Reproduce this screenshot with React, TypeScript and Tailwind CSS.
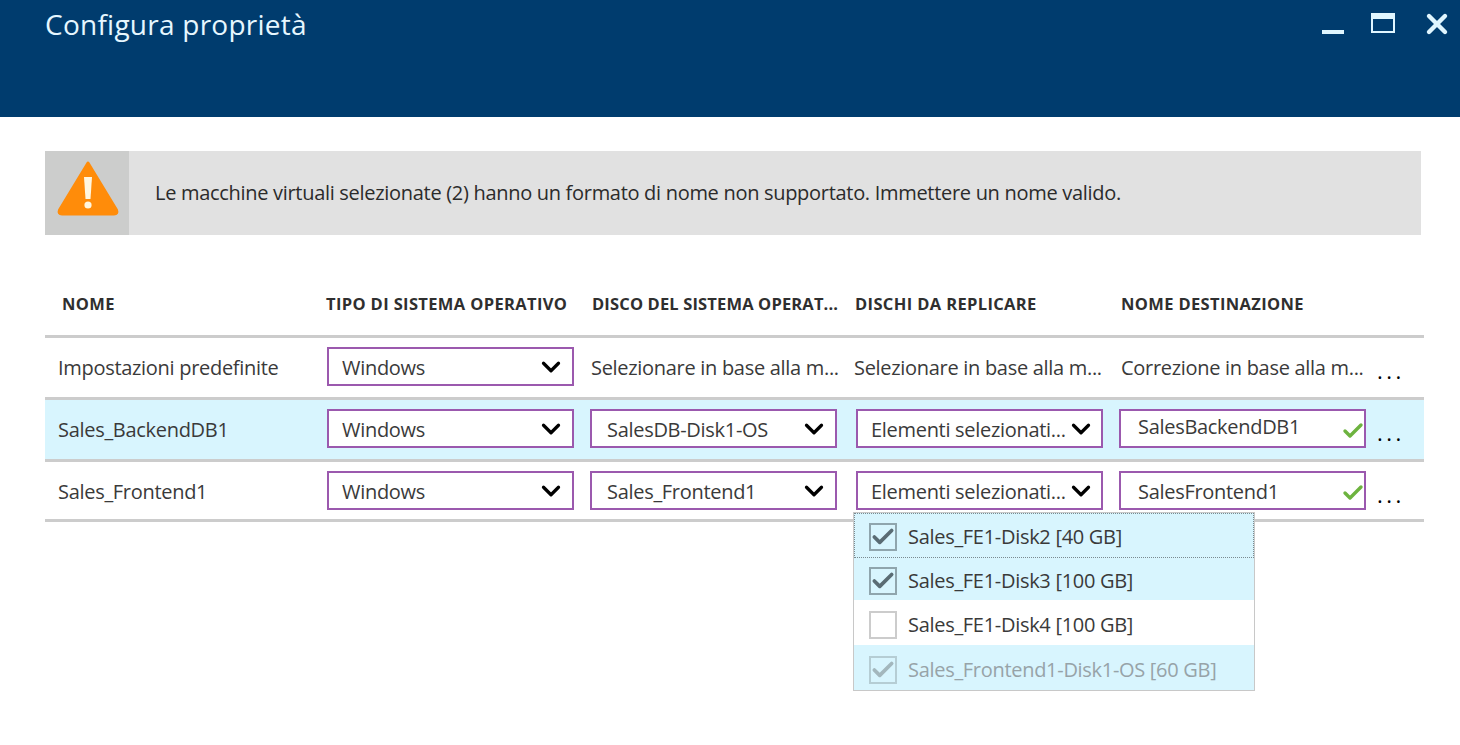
import { ChevronDown, Check, X } from 'lucide-react';

const FONT = "font-['Open_Sans','Noto_Sans',sans-serif]";

function Select({ label, className = '', labelClass = '' }: { label: string; className?: string; labelClass?: string }) {
  return (
    <div className={`flex h-[39px] w-[247px] items-center justify-between border-2 border-[#9b59ae] bg-white pl-[13px] pr-[6px] ${className}`}>
      <span className={`mt-[2px] text-[20px] tracking-[-0.3px] whitespace-nowrap text-[#3a3a3a] ${labelClass}`}>{label}</span>
      <ChevronDown size={30} strokeWidth={2.6} className="shrink-0 text-black" />
    </div>
  );
}

function NameInput({ value, offset = '' }: { value: string; offset?: string }) {
  return (
    <div className="flex h-[39px] w-[247px] items-center justify-between border-2 border-[#9b59ae] bg-white pl-[17px]">
      <span className={`text-[20px] tracking-[-0.3px] whitespace-nowrap text-[#3a3a3a] ${offset}`}>{value}</span>
      <Check size={24} strokeWidth={3.4} className="mt-1 -mr-[1px] shrink-0 text-[#6db33f]" />
    </div>
  );
}

function Dots() {
  return <span className="mt-[6px] ml-[11px] text-[22px] leading-none tracking-[3.5px] text-black">...</span>;
}

function DiskRow({ label, checked, bg, disabled, className = '' }: { label: string; checked: boolean; bg: string; disabled?: boolean; className?: string }) {
  return (
    <div className={`flex items-center ${bg} ${className}`}>
      <div className={`flex h-[28px] w-[28px] shrink-0 items-center justify-center border-2 ${disabled ? 'border-[#b5cdd4]' : checked ? 'border-[#8fa5ad]' : 'border-[#cccccc] bg-white'}`}>
        {checked && <Check size={26} strokeWidth={3.4} className={`shrink-0 ${disabled ? 'text-[#a3b7bd]' : 'text-[#5a6c74]'}`} />}
      </div>
      <span className={`ml-[11px] text-[20px] tracking-[-0.3px] whitespace-nowrap ${disabled ? 'text-[#97a3a8]' : 'text-[#3a3a3a]'}`}>{label}</span>
    </div>
  );
}

export default function App() {
  const headers = ['TIPO DI SISTEMA OPERATIVO', 'DISCO DEL SISTEMA OPERAT...', 'DISCHI DA REPLICARE', 'NOME DESTINAZIONE'];
  return (
    <div className={`h-[745px] w-[1460px] overflow-hidden bg-white ${FONT}`}>
      {/* Blade header */}
      <div className="flex h-[117px] items-start justify-between bg-[#003c6e] pl-[45px] pr-[7px]">
        <h1 className="pt-[3px] text-[28px] font-normal tracking-[0.25px] text-[#e6f7ff]">Configura proprietà</h1>
        <div className="flex items-start pt-[13px] text-[#e0f6ff]">
          <div className="mt-[17px] h-[4px] w-[22px] bg-[#e0f6ff]" />
          <div className="ml-[27px] h-[20px] w-[24px] border-2 border-t-[6px] border-[#e0f6ff]" />
          <X size={32} strokeWidth={3.3} className="ml-[26px] -mt-[5px]" />
        </div>
      </div>

      <div className="pl-[45px] pr-[36px] pt-[34px]">
        {/* Warning banner */}
        <div className="mr-[3px] flex h-[84px] items-stretch bg-[#e1e1e1]">
          <div className="flex w-[84px] items-center justify-center bg-[#cccdcc]">
            <svg width="64" height="60" viewBox="0 0 64 60" className="-mt-[6px] ml-[2px]">
              <path d="M32 3 L60.5 50 Q62 54 58 54 L6 54 Q2 54 3.5 50 Z" fill="#ff8c0a" stroke="#ff8c0a" strokeWidth="3" strokeLinejoin="round" />
              <path d="M28 17 L36 17 L34.5 39 L29.5 39 Z" fill="#fff6e0" />
              <circle cx="32" cy="45" r="3.6" fill="#fff6e0" />
            </svg>
          </div>
          <p className="ml-[26px] self-center text-[20px] tracking-[-0.3px] whitespace-nowrap text-[#2b2b2b]">
            Le macchine virtuali selezionate (2) hanno un formato di nome non supportato. Immettere un nome valido.
          </p>
        </div>

        {/* Table */}
        <div className="relative mt-[48px]">
          <div className="flex h-[55px] items-start border-b-[3px] border-[#cccccc] pt-[10px] text-[16.5px] leading-[22px] font-bold tracking-[0.36px] text-[#2f2f2f]">
            <span className="w-[281px] pl-[17px]">NOME</span>
            <span className="w-[266px]">{headers[0]}</span>
            <span className="w-[263px] tracking-[0.15px]">{headers[1]}</span>
            <span className="w-[266px]">{headers[2]}</span>
            <span className="whitespace-nowrap">{headers[3]}</span>
          </div>

          <div className="flex h-[62px] items-center border-b-[3px] border-[#cccccc] pb-[2px] text-[20px] tracking-[-0.3px] text-[#3a3a3a]">
            <span className="mt-[2px] w-[282px] pl-[13px]">Impostazioni predefinite</span>
            <Select label="Windows" />
            <span className="mt-[2px] ml-[17px] w-[247px] whitespace-nowrap">Selezionare in base alla m...</span>
            <span className="mt-[2px] ml-[16px] w-[250px] whitespace-nowrap">Selezionare in base alla m...</span>
            <span className="mt-[2px] ml-[17px] w-[245px] whitespace-nowrap">Correzione in base alla m...</span>
            <Dots />
          </div>

          <div className="flex h-[62px] items-center border-b-[3px] border-[#cccccc] bg-[#d8f5fe] pb-[2px] text-[20px] tracking-[-0.3px] text-[#3a3a3a]">
            <span className="mt-[2px] w-[282px] pl-[13px]">Sales_BackendDB1</span>
            <Select label="Windows" />
            <Select label="SalesDB-Disk1-OS" className="ml-[16px]" labelClass="ml-[2px]" />
            <Select label="Elementi selezionati..." className="ml-[19px]" />
            <div className="ml-[16px]"><NameInput value="SalesBackendDB1" offset="-mt-[3px]" /></div>
            <Dots />
          </div>

          <div className="flex h-[60px] items-center border-b-[3px] border-[#cccccc] text-[20px] tracking-[-0.3px] text-[#3a3a3a]">
            <span className="mt-[2px] w-[282px] pl-[13px]">Sales_Frontend1</span>
            <Select label="Windows" />
            <Select label="Sales_Frontend1" className="ml-[16px]" labelClass="ml-[2px]" />
            <Select label="Elementi selezionati..." className="ml-[19px]" />
            <div className="ml-[16px]"><NameInput value="SalesFrontend1" offset="mt-[2px]" /></div>
            <Dots />
          </div>

          {/* Disk dropdown */}
          <div className="absolute left-[808px] top-[229px] flex h-[179px] w-[402px] flex-col border border-[#c8c8c8] bg-white">
            <DiskRow label="Sales_FE1-Disk2 [40 GB]" checked bg="bg-[#d8f5fe]" className="h-[45px] border border-dotted border-[#7a8a90] pl-[14px] pt-[3px]" />
            <DiskRow label="Sales_FE1-Disk3 [100 GB]" checked bg="bg-[#d8f5fe]" className="h-[42px] pl-[15px] pt-[4px]" />
            <DiskRow label="Sales_FE1-Disk4 [100 GB]" checked={false} bg="bg-white" className="h-[45px] pl-[15px] pt-[4px]" />
            <DiskRow label="Sales_Frontend1-Disk1-OS [60 GB]" checked disabled bg="bg-[#d8f5fe]" className="h-[45px] pl-[15px] pt-[4px]" />
          </div>
        </div>
      </div>
    </div>
  );
}
